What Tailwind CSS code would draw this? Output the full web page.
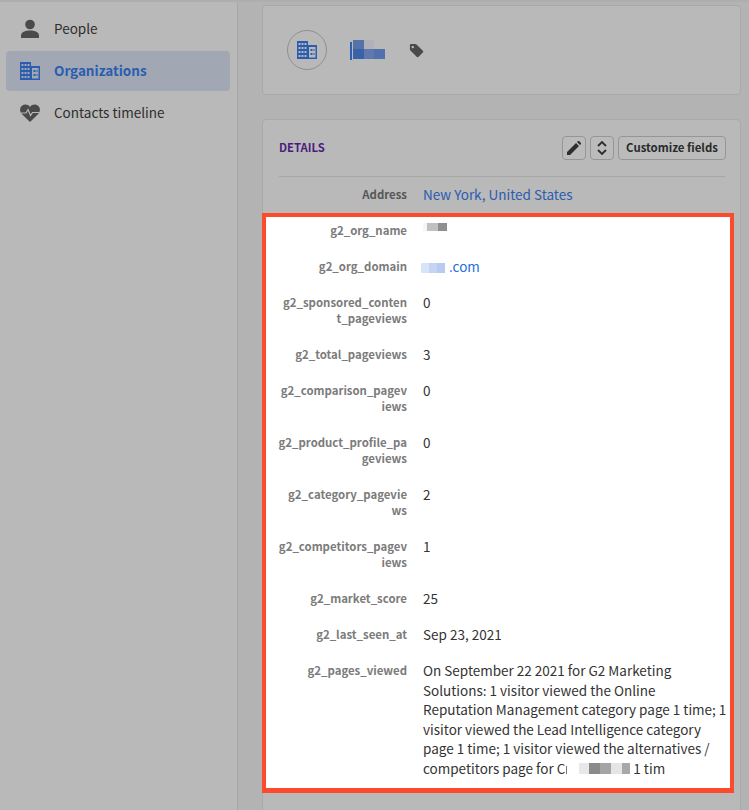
<!DOCTYPE html>
<html lang="en">
<head>
    <meta charset="UTF-8">
    <meta name="viewport" content="width=device-width, initial-scale=1.0">
    <title>Organization details</title>
    <script src="https://cdn.jsdelivr.net/npm/@tailwindcss/browser@4"></script>
</head>
<body class="bg-[#b3b3b3] font-['Noto_Sans_CJK_SC','Source_Sans_Pro',sans-serif]">
    <div class="flex h-[810px] w-[749px] overflow-hidden border-t-2 border-[#aeaeae]">
        <!-- Sidebar -->
        <aside class="w-[238px] shrink-0 border-r border-[#a8a8a8] bg-[#b9b9b9] pl-[6px] pr-[7px] pt-[5px]">
            <a class="flex h-[44px] items-center gap-[14px] pl-[14px] text-[13.5px] text-[#2e2e2e]">
                <svg class="h-5 w-5 shrink-0" viewBox="0 0 20 20" fill="#4a4a4a"><circle cx="10" cy="5.5" r="4.8"/><path d="M1 19v-2.500C1 13 5 11.400 10 11.400s9 1.600 9 5.100V19z"/></svg>
                <span class="-mt-[2px]">People</span>
            </a>
            <a class="flex h-10 items-center gap-[14px] rounded bg-[#a1a8b4] pl-[14px] text-[13.5px] font-semibold text-[#2a5cb0]">
                <svg class="h-[18px] w-5 shrink-0" viewBox="0 0 20 18" fill="#2a5cb0" fill-rule="evenodd"><path d="M0 0h11v4h9v14H0zM1.500 2v2h2V2zm3 0v2h2V2zm3 0v2h2V2zM1.500 6v2h2V6zm3 0v2h2V6zm3 0v2h2V6zM1.500 10v2h2v-2zm3 0v2h2v-2zm3 0v2h2v-2zM1.500 14v2h2v-2zm3 0v2h2v-2zm3 0v2h2v-2zM12 6v10.500h6.500V6zM13.500 8h2v2h-2zm0 4h2v2h-2zm3-4h1v2h-1zm0 4h1v2h-1z"/></svg>
                <span class="-mt-[2px]">Organizations</span>
            </a>
            <a class="flex h-[44px] items-center gap-[14px] pl-[14px] text-[13.5px] text-[#2e2e2e]">
                <svg class="h-5 w-5 shrink-0" viewBox="0 0 20 20"><path fill="#4a4a4a" d="M10 19 1.800 11C-.6 8.500-.4 4.600 2 2.800 4.600.8 8 1.400 10 4c2-2.600 5.400-3.200 8-1.200 2.400 1.800 2.600 5.700.2 8.200z"/><path fill="none" stroke="#b9b9b9" stroke-width="1.200" d="M1 10h5l2-3.500 2.500 6 2-3H19"/></svg>
                <span class="-mt-[2px]">Contacts timeline</span>
            </a>
        </aside>

        <!-- Main -->
        <main class="w-[511px] min-w-0 shrink-0 pl-6 pr-2 pt-[3px]">
            <div class="flex h-[90px] items-center gap-[23px] rounded border border-[#a9a9a9] bg-[#b9b9b9] pl-6">
                <span class="flex h-10 w-10 items-center justify-center rounded-full border border-[#8f8f8f]">
                    <svg class="h-[18px] w-5" viewBox="0 0 20 18" fill="#2a5cb0" fill-rule="evenodd"><path d="M0 0h11v4h9v14H0zM1.500 2v2h2V2zm3 0v2h2V2zm3 0v2h2V2zM1.500 6v2h2V6zm3 0v2h2V6zm3 0v2h2V6zM1.500 10v2h2v-2zm3 0v2h2v-2zm3 0v2h2v-2zM1.500 14v2h2v-2zm3 0v2h2v-2zm3 0v2h2v-2zM12 6v10.500h6.500V6zM13.500 8h2v2h-2zm0 4h2v2h-2zm3-4h1v2h-1zm0 4h1v2h-1z"/></svg>
                </span>
                <svg class="h-5 w-9" viewBox="0 0 36 20"><rect x="0" y="2" width="2" height="18" fill="#2f5fad"/><rect x="3" y="0" width="11" height="9" fill="#5373aa"/><rect x="14" y="0" width="10" height="9" fill="#b0b2b8"/><rect x="3" y="9" width="11" height="10" fill="#3a62a8"/><rect x="14" y="9" width="10" height="10" fill="#6078ad"/><rect x="24" y="9" width="11" height="10" fill="#5071ae"/></svg>
                <svg class="h-[15px] w-[15px]" viewBox="0 0 16 16" fill="#4a4a4a" fill-rule="evenodd"><path d="M1 2q0-1 1-1h5q.6 0 1 .5l7 7q.6.700 0 1.400L10 15q-.8.600-1.500 0l-7-7Q1 7.500 1 7zM4 3a1.300 1.300 0 1 0 .01 0z"/></svg>
            </div>

            <div class="mt-6 h-[800px] rounded border border-[#a9a9a9] bg-[#b9b9b9] px-4">
                <div class="-mr-px flex h-[57px] items-end border-b border-[#a6a6a6] pb-4">
                    <h2 class="mb-[3px] text-[11.3px] leading-[20px] font-semibold text-[#4c1d7d]">DETAILS</h2>
                    <div class="-mr-px ml-auto flex gap-1">
                        <button class="flex h-6 w-6 items-center justify-center rounded-sm border border-[#969696] bg-[#bbbbbb]">
                            <svg class="h-3.5 w-3.5" viewBox="0 0 14 14" fill="#2e2e2e"><path d="M0 14v-3L9 2l3 3-9 9zM10 1l1-1q.5-.300 1 0l2 2q.300.500 0 1l-1 1z"/></svg>
                        </button>
                        <button class="flex h-6 w-6 items-center justify-center rounded-sm border border-[#969696] bg-[#bbbbbb]">
                            <svg class="h-4 w-3" viewBox="0 0 12 16" fill="none" stroke="#2e2e2e" stroke-width="1.800"><path d="M2 6l4-4 4 4M2 10l4 4 4-4"/></svg>
                        </button>
                        <button class="h-6 w-[108px] rounded-sm border border-[#969696] bg-[#bbbbbb] text-[11.4px] font-semibold text-[#2a2a2a]">Customize fields</button>
                    </div>
                </div>
                <div class="grid h-[36px] grid-cols-[128px_1fr] items-center gap-4">
                    <span class="text-right text-[11.4px] font-semibold text-[#575757]">Address</span>
                    <a class="-mt-[2px] text-[13.5px] text-[#2a5cb0]">New York, United States</a>
                </div>

                <!-- Highlighted fields -->
                <div class="-ml-[17px] flex h-[580px] w-[472px] flex-col gap-5 overflow-hidden border-[4px] border-b-[5px] border-[#fb4a2c] bg-white pt-[5px] pl-3">
                    <div class="grid grid-cols-[129px_306px] gap-4">
                        <span class="text-right text-[11.4px] leading-4 font-semibold text-[#7b7b7b]">g2_org_name</span>
                        <span class="flex h-4 items-start pt-px">
                            <i class="h-2 w-1 bg-[#f5f5f5]"></i><i class="h-2 w-[11px] bg-[#c0c0c0]"></i><i class="h-2 w-[9px] bg-[#8f8f8f]"></i>
                        </span>
                    </div>
                    <div class="grid grid-cols-[129px_306px] gap-4">
                        <span class="text-right text-[11.4px] leading-4 font-semibold text-[#7b7b7b]">g2_org_domain</span>
                        <span class="-ml-[2px] flex h-4 items-center text-[13.5px] text-[#1f6fd6]">
                            <i class="mt-1 h-[10px] w-2 bg-[#d7e3f9]"></i><i class="mt-1 h-[10px] w-2 bg-[#c5d4f4]"></i><i class="mt-1 mr-1 h-[10px] w-2 bg-[#b7caf0]"></i>.com
                        </span>
                    </div>
                    <div class="grid grid-cols-[129px_306px] gap-4">
                        <span class="text-right text-[11.4px] leading-4 font-semibold text-[#7b7b7b]">g2_sponsored_conten<br>t_pageviews</span>
                        <span class="text-[13.5px] leading-4 text-[#333]">0</span>
                    </div>
                    <div class="grid grid-cols-[129px_306px] gap-4">
                        <span class="text-right text-[11.4px] leading-4 font-semibold text-[#7b7b7b]">g2_total_pageviews</span>
                        <span class="text-[13.5px] leading-4 text-[#333]">3</span>
                    </div>
                    <div class="grid grid-cols-[129px_306px] gap-4">
                        <span class="text-right text-[11.4px] leading-4 font-semibold text-[#7b7b7b]">g2_comparison_pagev<br>iews</span>
                        <span class="text-[13.5px] leading-4 text-[#333]">0</span>
                    </div>
                    <div class="grid grid-cols-[129px_306px] gap-4">
                        <span class="text-right text-[11.4px] leading-4 font-semibold text-[#7b7b7b]">g2_product_profile_pa<br>geviews</span>
                        <span class="text-[13.5px] leading-4 text-[#333]">0</span>
                    </div>
                    <div class="grid grid-cols-[129px_306px] gap-4">
                        <span class="text-right text-[11.4px] leading-4 font-semibold text-[#7b7b7b]">g2_category_pagevie<br>ws</span>
                        <span class="text-[13.5px] leading-4 text-[#333]">2</span>
                    </div>
                    <div class="grid grid-cols-[129px_306px] gap-4">
                        <span class="text-right text-[11.4px] leading-4 font-semibold text-[#7b7b7b]">g2_competitors_pagev<br>iews</span>
                        <span class="text-[13.5px] leading-4 text-[#333]">1</span>
                    </div>
                    <div class="grid grid-cols-[129px_306px] gap-4">
                        <span class="text-right text-[11.4px] leading-4 font-semibold text-[#7b7b7b]">g2_market_score</span>
                        <span class="text-[13.5px] leading-4 text-[#333]">25</span>
                    </div>
                    <div class="grid grid-cols-[129px_306px] gap-4">
                        <span class="text-right text-[11.4px] leading-4 font-semibold text-[#7b7b7b]">g2_last_seen_at</span>
                        <span class="text-[13.5px] leading-4 text-[#333]">Sep 23, 2021</span>
                    </div>
                    <div class="grid grid-cols-[129px_306px] gap-4">
                        <span class="text-right text-[11.4px] leading-4 font-semibold text-[#7b7b7b]">g2_pages_viewed</span>
                        <div class="-mt-px text-[13.5px] leading-[19.6px] whitespace-nowrap text-[#333]">
                            On September 22 2021 for G2 Marketing<br>Solutions: 1 visitor viewed the Online<br>Reputation Management category page 1 time; 1<br>visitor viewed the Lead Intelligence category<br>page 1 time; 1 visitor viewed the alternatives /<br>competitors page for C<i class="ml-px inline-block h-2 w-px bg-[#777]"></i><i class="inline-block h-[11px] w-[12px] bg-white"></i><i class="inline-block h-[11px] w-[10px] bg-[#e8e8e8]"></i><i class="inline-block h-[11px] w-[11px] bg-[#8a8a8a]"></i><i class="inline-block h-[11px] w-[11px] bg-[#a5a5a5]"></i><i class="inline-block h-[11px] w-[11px] bg-[#e5e5e5]"></i><i class="mr-[3px] inline-block h-[11px] w-2 bg-[#a8a8a8]"></i>1 tim
                        </div>
                    </div>
                </div>
            </div>
        </main>
    </div>
</body>
</html>
